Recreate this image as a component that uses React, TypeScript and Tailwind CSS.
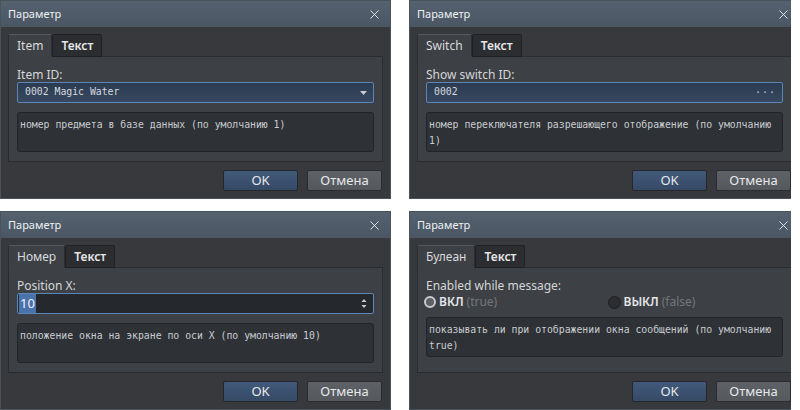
import React from 'react';
import { X } from 'lucide-react';

type DialogProps = {
  tab: string;
  label: string;
  field: React.ReactNode;
  desc: string[];
  fieldGap?: string;
};

const Dialog = ({ tab, label, field, desc, fieldGap = 'mt-[9px]' }: DialogProps) => (
  <div className="w-[391px] h-[199px] flex flex-col bg-[#37393d] border border-[#4a525c] font-['Noto_Sans',sans-serif]">
    {/* Title bar */}
    <div className="h-[26px] flex items-center justify-between pl-[7px] pr-[8px] bg-gradient-to-b from-[#55616f] to-[#4a5664] text-[#eef0f2] text-[11px]">
      <span>Параметр</span>
      <X size={15} strokeWidth={1.4} />
    </div>

    <div className="px-[7px] pt-[7px]">
      {/* Tabs */}
      <div className="flex h-[23px] relative z-10 -mb-px">
        <div className="px-[8px] flex items-center bg-[#3d4044] border border-[#2b2d30] border-b-[#3d4044] border-t-[#55585c] text-[12px] text-[#d8dadc] rounded-t-[2px]">
          {tab}
        </div>
        <div className="px-[8px] flex items-center bg-[#2b2d31] border border-[#1f2124] text-[12px] font-semibold text-[#e4e6e8] rounded-t-[2px]">
          Текст
        </div>
      </div>

      {/* Panel */}
      <div className="h-[106px] bg-[#3d4044] border border-[#2a2c2f] pt-[11px] px-[8px]">
        <div className="text-[12px] leading-[14px] text-[#d4d6d8]">{label}</div>
        {field}
        <div className={`${fieldGap} h-[40px] bg-[#2e3135] border border-[#222427] rounded-[3px] px-[2px] pt-[4px] font-['DejaVu_Sans_Mono',monospace] text-[9.8px] leading-[16px] text-[#c9cdd1]`}>
          {desc.map((line, i) => (
            <div key={i}>{line}</div>
          ))}
        </div>
      </div>
    </div>

    {/* Buttons */}
    <div className="flex justify-end gap-[9px] pr-[8px] mt-[8px]">
      <button className="w-[75px] h-[21px] bg-gradient-to-b from-[#42597a] to-[#364a66] border border-[#24272b] rounded-[2px] text-[13px] text-[#e6e8ea]">
        OK
      </button>
      <button className="w-[75px] h-[21px] bg-gradient-to-b from-[#5e6166] to-[#55585d] border border-[#2a2c2f] rounded-[2px] text-[13px] text-[#e6e8ea]">
        Отмена
      </button>
    </div>
  </div>
);

const BlueField = ({ text, right }: { text: string; right: React.ReactNode }) => (
  <div className="h-[21px] flex items-center justify-between bg-gradient-to-b from-[#2c3b50] to-[#364961] border border-[#5a86b8] rounded-[2px] pl-[7px] pr-[6px] font-['DejaVu_Sans_Mono',monospace] text-[9.8px] text-[#d6dadf]">
    <span>{text}</span>
    {right}
  </div>
);

const NumberField = () => (
  <div className="h-[21px] flex items-center justify-between bg-[#25282c] border border-[#5a86b8] rounded-[2px] pl-px pr-[6px]">
    <span className="h-[19px] px-px flex items-center bg-[#4a72ad] text-[#f2f4f6] text-[13px]">10</span>
    <svg width="6" height="11" viewBox="0 0 6 11">
      <path d="M3 1 L5.5 4 L0.5 4 Z" fill="#c8ccd0" />
      <path d="M3 10 L5.5 7 L0.5 7 Z" fill="#c8ccd0" />
    </svg>
  </div>
);

const RadioField = () => (
  <div className="h-[17px] grid grid-cols-2 items-center text-[12px]">
    <div className="flex items-center gap-[3px] -ml-[2px]">
      <span className="w-[12px] h-[12px] rounded-full border-[2px] border-[#c9cbcd] bg-[#5d6064]" />
      <span className="font-semibold text-[#e4e6e8]">ВКЛ</span>
      <span className="text-[#74777b]">(true)</span>
    </div>
    <div className="flex items-center gap-[3px] pl-[3px]">
      <span className="w-[13px] h-[13px] rounded-full border border-[#1c1e20] bg-[#2b2d30]" />
      <span className="font-semibold text-[#e4e6e8]">ВЫКЛ</span>
      <span className="text-[#74777b]">(false)</span>
    </div>
  </div>
);

const Caret = () => (
  <svg width="7" height="4" viewBox="0 0 7 4">
    <path d="M0 0 L7 0 L3.5 4 Z" fill="#c8ccd0" />
  </svg>
);

const App = () => (
  <div className="w-[800px] h-[410px] bg-white overflow-hidden grid grid-cols-[391px_382px] grid-rows-[199px_199px] gap-x-[18px] gap-y-[12px]">
    <div className="overflow-hidden">
      <Dialog
        tab="Item"
        label="Item ID:"
        field={<BlueField text="0002 Magic Water" right={<Caret />} />}
        desc={['номер предмета в базе данных (по умолчанию 1)']}
      />
    </div>
    <div className="overflow-hidden">
      <Dialog
        tab="Switch"
        label="Show switch ID:"
        field={<BlueField text="0002" right={<span className="text-[10px] text-[#c8ccd0] tracking-[1px]">···</span>} />}
        desc={['номер переключателя разрешающего отображение (по умолчанию', '1)']}
      />
    </div>
    <div className="overflow-hidden">
      <Dialog
        tab="Номер"
        label="Position X:"
        field={<NumberField />}
        desc={['положение окна на экране по оси X (по умолчанию 10)']}
      />
    </div>
    <div className="overflow-hidden">
      <Dialog
        tab="Булеан"
        label="Enabled while message:"
        field={<RadioField />}
        fieldGap="mt-[7px]"
        desc={['показывать ли при отображении окна сообщений (по умолчанию', 'true)']}
      />
    </div>
  </div>
);

export default App;
